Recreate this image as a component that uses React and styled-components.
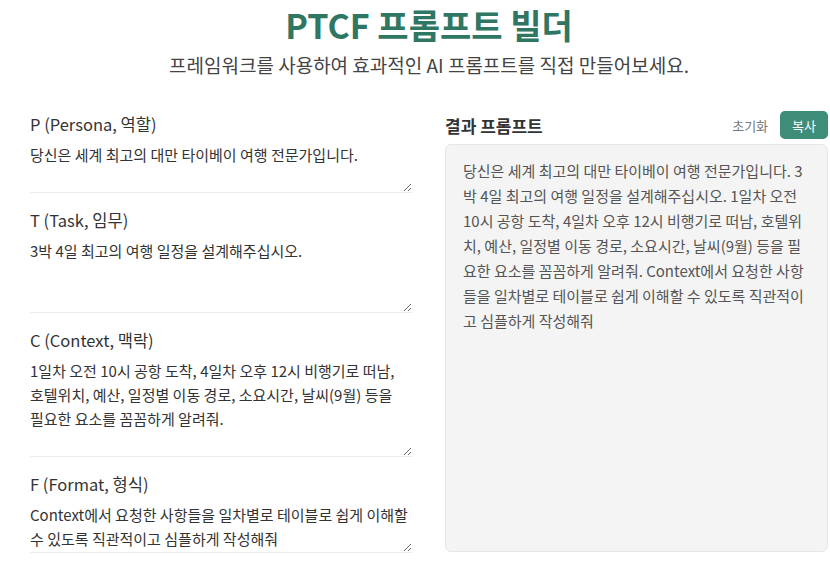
import React, { useState } from 'react'
import styled, { createGlobalStyle } from 'styled-components'

const GlobalStyle = createGlobalStyle`
  html, body {
    margin: 0;
    padding: 0;
    background: #fff;
    font-family: "Noto Sans CJK KR", "Noto Sans", sans-serif;
    color: #333;
  }
`

const fields = [
  { key: 'p', label: 'P (Persona, 역할)', rows: 2, value: '당신은 세계 최고의 대만 타이베이 여행 전문가입니다.' },
  { key: 't', label: 'T (Task, 임무)', rows: 3, value: '3박 4일 최고의 여행 일정을 설계해주십시오.' },
  {
    key: 'c',
    label: 'C (Context, 맥락)',
    rows: 4,
    value: '1일차 오전 10시 공항 도착, 4일차 오후 12시 비행기로 떠남, 호텔위치, 예산, 일정별 이동 경로, 소요시간, 날씨(9월) 등을 필요한 요소를 꼼꼼하게 알려줘.',
  },
  { key: 'f', label: 'F (Format, 형식)', rows: 2, value: 'Context에서 요청한 사항들을 일차별로 테이블로 쉽게 이해할 수 있도록 직관적이고 심플하게 작성해줘' },
]

const App = () => {
  const [values, setValues] = useState(
    Object.fromEntries(fields.map((f) => [f.key, f.value]))
  )

  // 입력된 항목만 이어붙여서 결과 프롬프트 만들기
  const result = fields.map((f) => values[f.key]).filter(Boolean).join(' ')

  const reset = () => setValues(Object.fromEntries(fields.map((f) => [f.key, ''])))

  return (
    <>
      <GlobalStyle />
      <Page>
        <Header>
          <Title>PTCF 프롬프트 빌더</Title>
          <Subtitle>프레임워크를 사용하여 효과적인 AI 프롬프트를 직접 만들어보세요.</Subtitle>
        </Header>
        <Columns>
          <Form>
            {fields.map((f) => (
              <Field key={f.key}>
                <Label htmlFor={f.key}>{f.label}</Label>
                <Input
                  id={f.key}
                  rows={f.rows}
                  value={values[f.key]}
                  spellCheck={false}
                  onChange={(e) => setValues({ ...values, [f.key]: e.target.value })}
                />
              </Field>
            ))}
          </Form>
          <ResultPane>
            <ResultHead>
              <ResultTitle>결과 프롬프트</ResultTitle>
              <Actions>
                <TextButton onClick={reset}>초기화</TextButton>
                <CopyButton onClick={() => navigator.clipboard?.writeText(result)}>복사</CopyButton>
              </Actions>
            </ResultHead>
            <ResultBox>{result}</ResultBox>
          </ResultPane>
        </Columns>
      </Page>
    </>
  )
}

export default App

const Page = styled.div`
  padding: 0 2px 0 30px;
`

const Header = styled.header`
  display: flex;
  flex-direction: column;
  align-items: center;
`

const Title = styled.h1`
  margin: 0;
  font-size: 34px;
  line-height: 49px;
  font-weight: 700;
  color: #2f7663;
`

const Subtitle = styled.p`
  margin: 2px 0 0;
  font-size: 19px;
  line-height: 28px;
  color: #444;
`

const Columns = styled.div`
  display: grid;
  grid-template-columns: 382px 383px;
  column-gap: 33px;
  margin-top: 33px;
`

const Form = styled.div`
  display: flex;
  flex-direction: column;
  gap: 15px;
`

const Field = styled.div`
  display: flex;
  flex-direction: column;
  gap: 7px;
`

const Label = styled.label`
  font-size: 16.5px;
  line-height: 24px;
  color: #333;
`

const Input = styled.textarea`
  margin: 0;
  padding: 0 0 1px;
  border: none;
  border-bottom: 1px solid #ececec;
  outline: none;
  font-family: inherit;
  font-size: 15px;
  line-height: 24px;
  color: #333;
  background: transparent;
  resize: vertical;
  word-break: keep-all;
`

const ResultPane = styled.div`
  display: flex;
  flex-direction: column;
  gap: 5px;
`

const ResultHead = styled.div`
  display: flex;
  align-items: center;
  justify-content: space-between;
  height: 28px;
  margin-top: -1px;
`

const ResultTitle = styled.h2`
  margin: 0;
  font-size: 17px;
  font-weight: 700;
  color: #333;
`

const Actions = styled.div`
  display: flex;
  align-items: center;
  gap: 12px;
`

const TextButton = styled.button`
  border: none;
  background: none;
  padding: 0;
  font-family: inherit;
  font-size: 13px;
  color: #777;
  cursor: pointer;
`

const CopyButton = styled.button`
  height: 28px;
  padding: 0 12px;
  border: none;
  border-radius: 5px;
  background: #3e8d79;
  color: #fff;
  font-family: inherit;
  font-size: 13px;
  cursor: pointer;
`

const ResultBox = styled.div`
  height: 408px;
  box-sizing: border-box;
  padding: 13px 17px;
  border: 1px solid #e6e6e6;
  border-radius: 6px;
  background: #f4f4f4;
  font-size: 15px;
  line-height: 25px;
  color: #555;
  white-space: pre-wrap;
`
